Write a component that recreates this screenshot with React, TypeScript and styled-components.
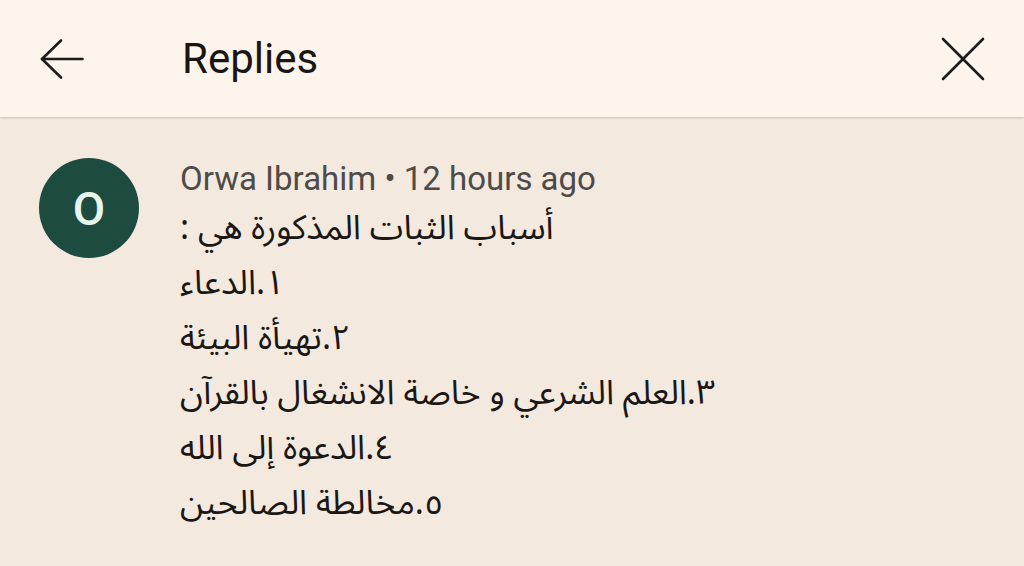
import React from "react";
import styled, { createGlobalStyle } from "styled-components";

const Global = createGlobalStyle`
  html, body { margin: 0; padding: 0; background: #f3e9df; }
  body { font-family: Roboto, "Noto Sans", sans-serif; }
  #root { width: 1024px; height: 566px; overflow: hidden; }
`;

const Page = styled.div`
  width: 1024px;
  height: 566px;
  background: #f3e9df;
  display: flex;
  flex-direction: column;
`;

const Header = styled.header`
  height: 117px;
  flex: none;
  background: #fdf5ec;
  box-shadow: 0 1px 2px rgba(80, 60, 40, 0.22);
  display: flex;
  align-items: center;
  padding: 0 39px 0 40px;
  position: relative;
  z-index: 1;
`;

const IconButton = styled.button`
  background: none;
  border: 0;
  padding: 0;
  margin: 0;
  display: flex;
  align-items: center;
  justify-content: center;
  color: #1b1b1b;
  cursor: pointer;
`;

const Title = styled.h1`
  margin: 0 0 0 98px;
  flex: 1;
  font-family: Roboto, sans-serif;
  font-weight: 400;
  font-size: 42px;
  color: #1b1613;
  line-height: 1;
`;

const Body = styled.main`
  display: flex;
  padding: 41px 0 0 39px;
  gap: 41px;
`;

const Avatar = styled.div`
  width: 100px;
  height: 100px;
  flex: none;
  border-radius: 50%;
  background: #1d4b3f;
  color: #e6f5ec;
  display: flex;
  align-items: center;
  justify-content: center;
  font-family: Roboto, sans-serif;
  font-size: 47px;
  font-weight: 500;
`;

const Content = styled.div`
  display: flex;
  flex-direction: column;
`;

const Meta = styled.div`
  font-family: Roboto, sans-serif;
  font-size: 33px;
  line-height: 40px;
  color: #4f4b48;
  white-space: nowrap;
  margin-top: 1px;
`;

const Lines = styled.div`
  display: flex;
  flex-direction: column;
  padding-top: 2px;
`;

const Line = styled.p`
  margin: 0;
  font-family: "Noto Sans Arabic", "Noto Naskh Arabic", "DejaVu Sans", sans-serif;
  font-size: 34px;
  line-height: 55px;
  height: 55px;
  color: #1a1714;
  unicode-bidi: plaintext;
  text-align: left;
  white-space: nowrap;
`;

const lines = [
  "أسباب الثبات المذكورة هي :",
  "١.الدعاء",
  "٢.تهيأة البيئة",
  "٣.العلم الشرعي و خاصة الانشغال بالقرآن",
  "٤.الدعوة إلى الله",
  "٥.مخالطة الصالحين",
];

export default function App() {
  return (
    <Page>
      <Global />
      <Header>
        <IconButton aria-label="Back">
          <svg width="44" height="40" viewBox="0 0 44 40" fill="none" stroke="currentColor" strokeWidth="2.6" strokeLinecap="round" strokeLinejoin="round">
            <path d="M42.5 20H2" />
            <path d="M21 1.5L2 20l19 18.5" />
          </svg>
        </IconButton>
        <Title>Replies</Title>
        <IconButton aria-label="Close">
          <svg width="44" height="44" viewBox="0 0 44 44" fill="none" stroke="currentColor" strokeWidth="2.6" strokeLinecap="round">
            <path d="M2 2l40 40" />
            <path d="M42 2L2 42" />
          </svg>
        </IconButton>
      </Header>
      <Body>
        <Avatar>O</Avatar>
        <Content>
          <Meta>Orwa Ibrahim • 12 hours ago</Meta>
          <Lines>
            {lines.map((l, i) => (
              <Line key={i}>{l}</Line>
            ))}
          </Lines>
        </Content>
      </Body>
    </Page>
  );
}
